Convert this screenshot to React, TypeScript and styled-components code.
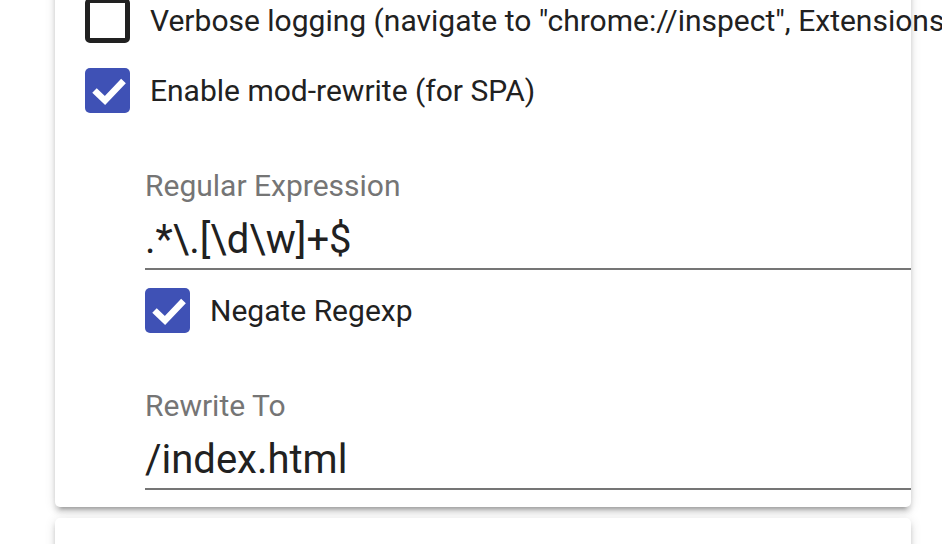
import styled, { createGlobalStyle } from 'styled-components'

const GlobalStyle = createGlobalStyle`
    html, body {
        margin: 0;
        padding: 0;
        background: #ffffff;
        overflow: hidden;
    }
    body {
        font-family: Roboto, "Noto Sans", "Liberation Sans", sans-serif;
        color: #212121;
    }
`

const Page = styled.div`
    width: 942px;
    height: 544px;
    overflow: hidden;
`

const Card = styled.div<{ $last?: boolean }>`
    width: 856px;
    margin-left: 55px;
    margin-top: ${(p) => (p.$last ? '11px' : '-30px')};
    padding: ${(p) => (p.$last ? '0' : '28px 0 17px 30px')};
    min-height: ${(p) => (p.$last ? '200px' : '0')};
    box-sizing: border-box;
    background: #ffffff;
    border-radius: 5px;
    box-shadow: 0 5px 5px 0 rgba(0, 0, 0, 0.14),
        0 2px 12px 0 rgba(0, 0, 0, 0.12),
        0 7px 3px -5px rgba(0, 0, 0, 0.2);
`

const CheckRow = styled.label<{ $gap?: number }>`
    display: flex;
    align-items: center;
    margin-top: ${(p) => p.$gap ?? 0}px;
    white-space: nowrap;
`

const Box = styled.span<{ $checked: boolean }>`
    flex: none;
    width: 45px;
    height: 45px;
    box-sizing: border-box;
    border-radius: 5px;
    border: ${(p) => (p.$checked ? 'none' : '5px solid #212121')};
    background: ${(p) => (p.$checked ? '#3f51b5' : 'transparent')};
    display: flex;
`

const CheckText = styled.span`
    margin-left: 20px;
    font-size: 30px;
    line-height: 36px;
    color: #212121;
`

const SubSection = styled.div`
    padding-left: 60px;
`

const Field = styled.div`
    margin-top: 55px;
    border-bottom: 2px solid #757575;
    padding-bottom: 4px;
`

const FieldLabel = styled.div`
    font-size: 30px;
    line-height: 36px;
    color: #757575;
`

const FieldValue = styled.div`
    margin-top: 12px;
    font-size: 40px;
    line-height: 48px;
    color: #212121;
    white-space: nowrap;
`

const Checkbox = ({
    checked,
    label,
    gap,
}: {
    checked: boolean
    label: string
    gap?: number
}) => (
    <CheckRow $gap={gap}>
        <Box $checked={checked}>
            {checked && (
                <svg width="45" height="45" viewBox="0 0 45 45">
                    <polyline
                        points="9.5,22.5 20,32.5 38.5,13"
                        fill="none"
                        stroke="#ffffff"
                        strokeWidth="6.5"
                    />
                </svg>
            )}
        </Box>
        <CheckText>{label}</CheckText>
    </CheckRow>
)

export default function App() {
    return (
        <Page>
            <GlobalStyle />
            <Card>
                <Checkbox
                    checked={false}
                    label={'Verbose logging (navigate to "chrome://inspect", Extensions)'}
                />
                <Checkbox checked label="Enable mod-rewrite (for SPA)" gap={25} />
                <SubSection>
                    <Field>
                        <FieldLabel>Regular Expression</FieldLabel>
                        <FieldValue>.*\.[\d\w]+$</FieldValue>
                    </Field>
                    <Checkbox checked label="Negate Regexp" gap={18} />
                    <Field>
                        <FieldLabel>Rewrite To</FieldLabel>
                        <FieldValue>/index.html</FieldValue>
                    </Field>
                </SubSection>
            </Card>
            <Card $last />
        </Page>
    )
}
